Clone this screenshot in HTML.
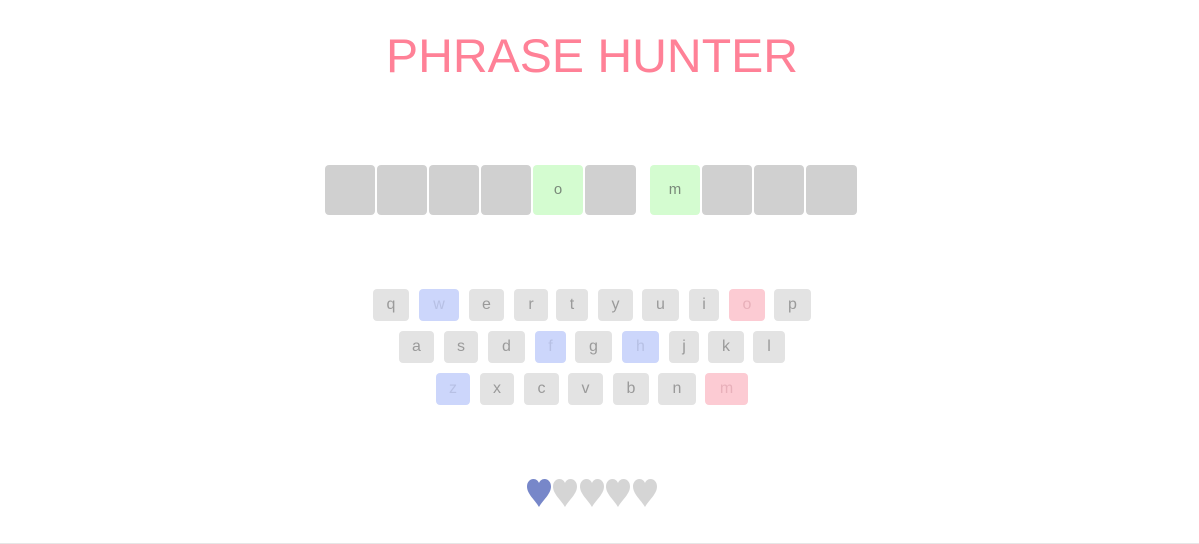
<!DOCTYPE html>
<html><head><meta charset="utf-8"><style>
html,body{margin:0;padding:0;background:#fff;width:1199px;height:544px;overflow:hidden;position:relative;font-family:"Liberation Sans",sans-serif}
.b{position:absolute;top:165px;width:50px;height:50px;border-radius:4px;background:#d0d0d0;color:#7a8a7a;font-size:15px;text-align:center;line-height:50px}
.g{background:#d4fcd0}
.k{position:absolute;height:32px;border-radius:4px;background:#e3e3e3;color:#9a9a9a;font-size:16px;text-align:center;line-height:31px}
.bl{background:#ccd6fb;color:#b7c0e4}
.pk{background:#fccbd3;color:#e8b0ba}
.h{position:absolute;top:479px}
</style></head><body>
<svg style="position:absolute;left:0;top:0" width="1199" height="90"><text x="386" y="72" textLength="412" lengthAdjust="spacingAndGlyphs" font-family="Liberation Sans" font-size="47" fill="#ff8197">PHRASE HUNTER</text></svg>
<div class="b" style="left:325px"></div><div class="b" style="left:377px"></div><div class="b" style="left:429px"></div><div class="b" style="left:481px"></div><div class="b g" style="left:533px">o</div><div class="b" style="left:585px;width:51px"></div>
<div class="b g" style="left:650px">m</div><div class="b" style="left:702px"></div><div class="b" style="left:754px"></div><div class="b" style="left:806px;width:51px"></div>

<div class="k" style="top:289px;left:373px;width:36px">q</div>
<div class="k bl" style="top:289px;left:419px;width:40px">w</div>
<div class="k" style="top:289px;left:469px;width:35px">e</div>
<div class="k" style="top:289px;left:514px;width:34px">r</div>
<div class="k" style="top:289px;left:556px;width:32px">t</div>
<div class="k" style="top:289px;left:598px;width:35px">y</div>
<div class="k" style="top:289px;left:642px;width:37px">u</div>
<div class="k" style="top:289px;left:689px;width:30px">i</div>
<div class="k pk" style="top:289px;left:729px;width:36px">o</div>
<div class="k" style="top:289px;left:774px;width:37px">p</div>

<div class="k" style="top:331px;left:399px;width:35px">a</div>
<div class="k" style="top:331px;left:444px;width:34px">s</div>
<div class="k" style="top:331px;left:488px;width:37px">d</div>
<div class="k bl" style="top:331px;left:535px;width:31px">f</div>
<div class="k" style="top:331px;left:575px;width:37px">g</div>
<div class="k bl" style="top:331px;left:622px;width:37px">h</div>
<div class="k" style="top:331px;left:669px;width:30px">j</div>
<div class="k" style="top:331px;left:708px;width:36px">k</div>
<div class="k" style="top:331px;left:753px;width:32px">l</div>

<div class="k bl" style="top:373px;left:436px;width:34px">z</div>
<div class="k" style="top:373px;left:480px;width:34px">x</div>
<div class="k" style="top:373px;left:524px;width:35px">c</div>
<div class="k" style="top:373px;left:568px;width:35px">v</div>
<div class="k" style="top:373px;left:613px;width:36px">b</div>
<div class="k" style="top:373px;left:658px;width:38px">n</div>
<div class="k pk" style="top:373px;left:705px;width:43px">m</div>

<svg class="h" style="left:527px" width="24" height="28" viewBox="0 0 24 28"><path d="M12 28C8 21 0 15 0 7.5 0 3 3 0 6.5 0 9 0 11 1.5 12 4 13 1.5 15 0 17.5 0 21 0 24 3 24 7.5 24 15 16 21 12 28Z" fill="#7787c9"/></svg>
<svg class="h" style="left:553px" width="24" height="28" viewBox="0 0 24 28"><path d="M12 28C8 21 0 15 0 7.5 0 3 3 0 6.5 0 9 0 11 1.5 12 4 13 1.5 15 0 17.5 0 21 0 24 3 24 7.5 24 15 16 21 12 28Z" fill="#d5d5d5"/></svg>
<svg class="h" style="left:580px" width="24" height="28" viewBox="0 0 24 28"><path d="M12 28C8 21 0 15 0 7.5 0 3 3 0 6.5 0 9 0 11 1.5 12 4 13 1.5 15 0 17.5 0 21 0 24 3 24 7.5 24 15 16 21 12 28Z" fill="#d5d5d5"/></svg>
<svg class="h" style="left:606px" width="24" height="28" viewBox="0 0 24 28"><path d="M12 28C8 21 0 15 0 7.5 0 3 3 0 6.5 0 9 0 11 1.5 12 4 13 1.5 15 0 17.5 0 21 0 24 3 24 7.5 24 15 16 21 12 28Z" fill="#d5d5d5"/></svg>
<svg class="h" style="left:633px" width="24" height="28" viewBox="0 0 24 28"><path d="M12 28C8 21 0 15 0 7.5 0 3 3 0 6.5 0 9 0 11 1.5 12 4 13 1.5 15 0 17.5 0 21 0 24 3 24 7.5 24 15 16 21 12 28Z" fill="#d5d5d5"/></svg>
<div style="position:absolute;left:0;top:543px;width:1199px;height:1px;background:#e6e6e6"></div>
</body></html>
